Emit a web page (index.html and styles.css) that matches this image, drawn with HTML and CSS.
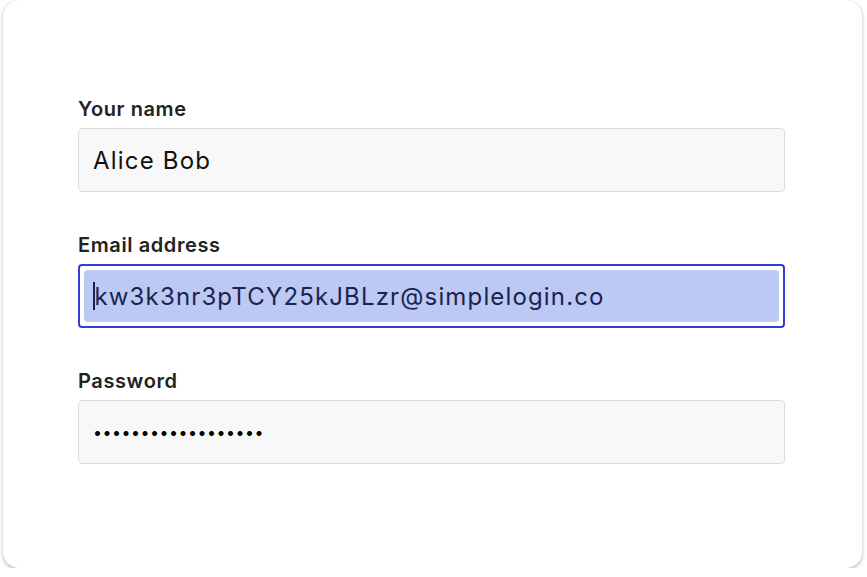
FILE: index.html
```html
<!DOCTYPE html>
<html lang="en">
<head>
<meta charset="utf-8">
<link rel="stylesheet" href="styles.css">
</head>
<body>
<div class="card">
  <form class="form">
    <div class="field">
      <label class="label">Your name</label>
      <div class="input">Alice Bob</div>
    </div>
    <div class="field">
      <label class="label">Email address</label>
      <div class="input input-focus"><span class="selection"><span class="caret"></span>kw3k3nr3pTCY25kJBLzr@simplelogin.co</span></div>
    </div>
    <div class="field">
      <label class="label">Password</label>
      <div class="input input-password">••••••••••••••••••</div>
    </div>
  </form>
</div>
</body>
</html>
```
FILE: styles.css
```css
html, body {
  margin: 0;
  padding: 0;
  background: #ffffff;
}
body {
  font-family: Inter, "Noto Sans", sans-serif;
  color: #222;
}
.card {
  box-sizing: border-box;
  margin: 0 5px 0 3px;
  height: 568px;
  background: #fff;
  border-radius: 16px;
  box-shadow: 0 2px 4px rgba(0,0,0,0.25), 0 0 1px rgba(0,0,0,0.15);
  padding: 98px 77px 0 75px;
}
.form {
  display: flex;
  flex-direction: column;
  gap: 42px;
}
.field {
  display: flex;
  flex-direction: column;
  gap: 8px;
}
.label {
  font-size: 20px;
  font-weight: 600;
  line-height: 22px;
  letter-spacing: 0.6px;
  color: #222;
}
.input {
  box-sizing: border-box;
  height: 64px;
  background: #f8f8f8;
  border: 1px solid #dcdcdc;
  border-radius: 4px;
  padding: 0 14px;
  display: flex;
  align-items: center;
  font-size: 24px;
  letter-spacing: 1.2px;
  color: #111;
}
.input-focus {
  border: 2px solid #3240d0;
  background: #fff;
  padding: 4px;
  letter-spacing: 1.15px;
}
.selection {
  flex: 1;
  align-self: stretch;
  background: #bbc9f3;
  border-radius: 4px;
  display: flex;
  align-items: center;
  padding-left: 9px;
  color: #1c2250;
}
.caret {
  display: inline-block;
  width: 1.5px;
  height: 28px;
  background: #1c2250;
  margin-right: 0;
}
.input-password {
  font-size: 16px;
  letter-spacing: 0.5px;
  color: #000;
}
```
